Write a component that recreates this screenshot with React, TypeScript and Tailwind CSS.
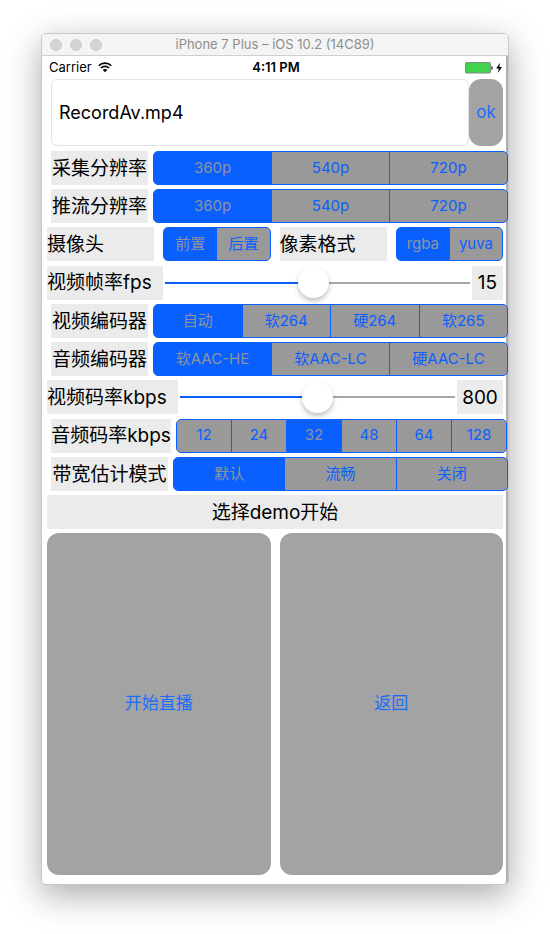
import { useState } from "react";
import type { ReactNode } from "react";

type SegmentsProps = {
  name: string;
  label: string;
  options: string[];
  initial?: number;
};

function Segments({ name, label, options, initial = 0 }: SegmentsProps) {
  const [selected, setSelected] = useState(initial);
  return (
    <div
      role="radiogroup"
      aria-label={label}
      className="relative flex h-full min-w-0 flex-1 divide-x divide-[#0a60ff] overflow-hidden rounded-[5px] border border-[#0a60ff] bg-[#999999]"
    >
      {options.map((option, i) => (
        <label
          key={option}
          className={
            "flex min-w-0 flex-1 basis-0 cursor-pointer items-center justify-center whitespace-nowrap text-[15px] " +
            (i === selected ? "bg-[#0a60ff] text-[#8f939b]" : "text-[#0a60ff]")
          }
        >
          <input
            type="radio"
            name={name}
            className="sr-only"
            checked={i === selected}
            onChange={() => setSelected(i)}
          />
          {option}
        </label>
      ))}
    </div>
  );
}

function Caption({ children, className = "" }: { children: ReactNode; className?: string }) {
  return (
    <span className={"flex h-full shrink-0 items-center whitespace-nowrap bg-[#ebebeb] pt-[2px] text-[19px] " + className}>
      {children}
    </span>
  );
}

function SegmentRow({ width, inset = "-mr-[5px]", ...rest }: SegmentsProps & { width: string; inset?: string }) {
  return (
    <div className={"ml-1 flex h-[34px] gap-[5px] " + inset}>
      <Caption className={"justify-center " + width}>{rest.label}</Caption>
      <Segments {...rest} />
    </div>
  );
}

type SliderRowProps = {
  id: string;
  label: string;
  max: number;
  initial: number;
  labelWidth: string;
  valueWidth: string;
};

function SliderRow({ id, label, max, initial, labelWidth, valueWidth }: SliderRowProps) {
  const [value, setValue] = useState(initial);
  const percent = (value / max) * 100;
  return (
    <div className="flex h-[34px] items-center gap-[2px]">
      <label
        htmlFor={id}
        className={"flex h-full shrink-0 items-center whitespace-nowrap bg-[#ebebeb] pt-[2px] text-[19px] " + labelWidth}
      >
        {label}
      </label>
      <input
        id={id}
        type="range"
        min={0}
        max={max}
        value={value}
        onChange={(e) => setValue(Number(e.target.value))}
        style={{
          backgroundImage: `linear-gradient(to right, #0a60ff ${percent}%, #a6a6a6 ${percent}%)`,
        }}
        className="h-8 min-w-0 flex-1 cursor-pointer appearance-none bg-transparent bg-[length:100%_2px] bg-center bg-no-repeat [&::-webkit-slider-thumb]:size-[31px] [&::-webkit-slider-thumb]:appearance-none [&::-webkit-slider-thumb]:rounded-full [&::-webkit-slider-thumb]:bg-white [&::-webkit-slider-thumb]:shadow-[0_3px_5px_rgba(0,0,0,0.25)]"
      />
      <output
        htmlFor={id}
        className={"flex h-full shrink-0 items-center justify-center bg-[#ebebeb] pt-[2px] text-[19px] " + valueWidth}
      >
        {value}
      </output>
    </div>
  );
}

function WifiIcon() {
  return (
    <svg viewBox="0 0 14 11" className="h-[11px] w-[14px]" fill="none" stroke="#000" strokeWidth="1.6" aria-hidden="true">
      <path d="M0.7 3.7C4.2 0.3 9.8 0.3 13.3 3.7" />
      <path d="M2.9 6C5.2 3.8 8.8 3.8 11.1 6" />
      <path d="M7 10.3L4.6 7.8C6 6.6 8 6.6 9.4 7.8Z" fill="#000" stroke="none" />
    </svg>
  );
}

function BatteryIcon() {
  return (
    <svg viewBox="0 0 38 12" className="h-3 w-[38px]" aria-hidden="true">
      <rect x="0.5" y="0.5" width="25" height="10.5" rx="1" fill="#40d44e" stroke="#7f8a80" />
      <path d="M26.5 4V8C28 7.6 28 4.4 26.5 4Z" fill="#000" />
      <path d="M35 0.8L31.2 6.4H33.8L32.8 11L37 5H34.3Z" fill="#000" />
    </svg>
  );
}

export default function App() {
  const [fileName, setFileName] = useState("RecordAv.mp4");
  return (
    <div className="min-h-screen bg-white px-[41px] pt-[33px] pb-12 font-['Inter','Noto_Sans_CJK_SC',sans-serif] text-black">
      <div className="rounded-[5px] border border-[#c8c8c8] bg-white shadow-[0_10px_34px_rgba(0,0,0,0.34)]">
        <header className="flex h-[22px] items-center rounded-t-[4px] border-b border-[#cfcfcf] bg-[#f4f4f4] px-2">
          <div className="flex flex-1 gap-2">
            <span className="size-3 rounded-full border border-[#cdcdcd] bg-[#d3d3d3]" />
            <span className="size-3 rounded-full border border-[#cdcdcd] bg-[#d3d3d3]" />
            <span className="size-3 rounded-full border border-[#cdcdcd] bg-[#d3d3d3]" />
          </div>
          <h1 className="text-[13px] text-[#8e8e8e]">iPhone 7 Plus – iOS 10.2 (14C89)</h1>
          <div className="flex-1" />
        </header>

        <div className="rounded-br-[4px] border-r-2 border-[#b0b0b0] pb-[9px]">
          <div className="flex h-[23px] items-center pl-[7px] pr-[3px]">
            <div className="flex flex-1 items-center gap-[6px] text-[13px]">
              Carrier
              <WifiIcon />
            </div>
            <div className="text-[13px] font-semibold">4:11 PM</div>
            <div className="flex flex-1 justify-end">
              <BatteryIcon />
            </div>
          </div>

          <main className="pl-[5px] pr-[3px]">
            <div className="ml-1 flex h-[67px]">
              <input
                type="text"
                aria-label="文件名"
                value={fileName}
                onChange={(e) => setFileName(e.target.value)}
                className="min-w-0 flex-1 rounded-[6px] border border-[#e2e2e2] bg-white px-[7px] text-[18px] outline-none"
              />
              <button type="button" className="w-[34px] rounded-xl bg-[#a3a3a3] text-[17px] text-[#1a6dff]">
                ok
              </button>
            </div>

            <div className="mt-[5px] flex h-[378px] flex-col justify-between">
              <SegmentRow name="capture" label="采集分辨率" width="w-[97px]" options={["360p", "540p", "720p"]} />
              <SegmentRow name="stream" label="推流分辨率" width="w-[97px]" options={["360p", "540p", "720p"]} />
              <div className="grid h-[34px] grid-cols-4 gap-[9px]">
                <Caption>摄像头</Caption>
                <Segments name="camera" label="摄像头" options={["前置", "后置"]} />
                <Caption>像素格式</Caption>
                <Segments name="pixel" label="像素格式" options={["rgba", "yuva"]} />
              </div>
              <SliderRow
                id="fps"
                label="视频帧率fps"
                max={31}
                initial={15}
                labelWidth="w-[116px]"
                valueWidth="w-[31px]"
              />
              <SegmentRow
                name="vcodec"
                label="视频编码器"
                width="w-[97px]"
                options={["自动", "软264", "硬264", "软265"]}
              />
              <SegmentRow
                name="acodec"
                label="音频编码器"
                width="w-[97px]"
                options={["软AAC-HE", "软AAC-LC", "硬AAC-LC"]}
              />
              <SliderRow
                id="vbps"
                label="视频码率kbps"
                max={1600}
                initial={800}
                labelWidth="w-[131px]"
                valueWidth="w-[46px]"
              />
              <SegmentRow
                name="abps"
                label="音频码率kbps"
                width="w-[120px]"
                inset="-mr-[4px]"
                options={["12", "24", "32", "48", "64", "128"]}
                initial={2}
              />
              <SegmentRow
                name="bandwidth"
                label="带宽估计模式"
                width="w-[117px]"
                options={["默认", "流畅", "关闭"]}
              />
              <h2 className="flex h-[34px] items-center justify-center bg-[#ebebeb] pt-[2px] text-[19px]">选择demo开始</h2>
            </div>

            <div className="mt-1 grid h-[342px] grid-cols-2 gap-[9px]">
              <button type="button" className="rounded-xl bg-[#a3a3a3] text-[17px] text-[#1a6dff]">
                开始直播
              </button>
              <button type="button" className="rounded-xl bg-[#a3a3a3] text-[17px] text-[#1a6dff]">
                返回
              </button>
            </div>
          </main>
        </div>
      </div>
    </div>
  );
}
